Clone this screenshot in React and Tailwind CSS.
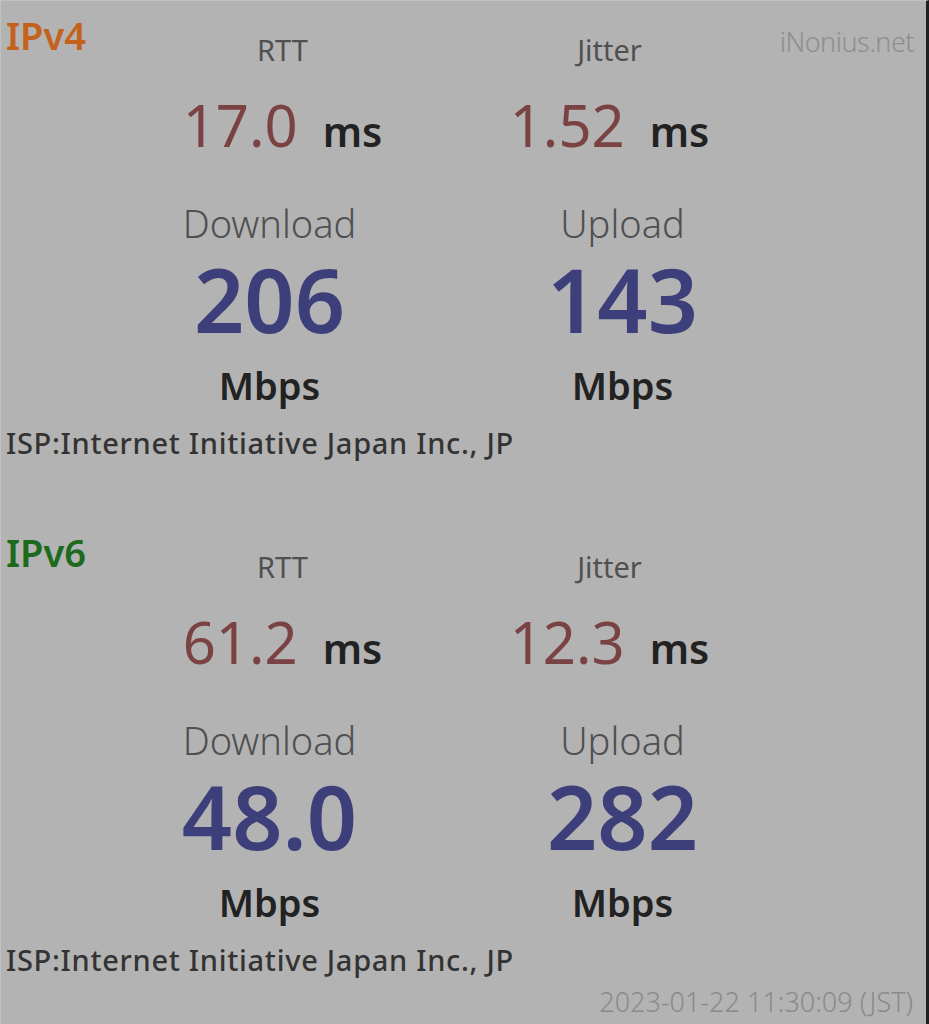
import React from "react";

function Section({ label, labelColor, rtt, jitter, down, up, showBrand }) {
  return (
    <div>
      <div className="flex items-start h-[64px]">
        <div className={`w-[118px] pl-[5px] pt-[16px] text-[38px] leading-none font-semibold ${labelColor}`}>{label}</div>
        <div className="w-[327px] pt-[35px] text-center text-[29px] leading-none text-[#505050]">RTT</div>
        <div className="w-[327px] pt-[35px] text-center text-[29px] leading-none text-[#505050]">Jitter</div>
        {showBrand && (
          <div className="flex-1 pt-[28px] pr-[12px] text-right text-[27px] leading-none font-light text-[#8e8e8e] tracking-[-0.5px]">iNonius.net</div>
        )}
      </div>
      <div className="flex mt-[32px] pl-[118px]">
        <div className="w-[327px] flex justify-center items-baseline gap-[25px]">
          <span className="text-[58px] leading-none text-[#7a4242]">{rtt}</span>
          <span className="text-[41px] leading-none font-semibold text-[#222]">ms</span>
        </div>
        <div className="w-[327px] flex justify-center items-baseline gap-[25px]">
          <span className="text-[58px] leading-none text-[#7a4242]">{jitter}</span>
          <span className="text-[41px] leading-none font-semibold text-[#222]">ms</span>
        </div>
      </div>
      <div className="flex mt-[50px] pl-[92px]">
        {[["Download", down], ["Upload", up]].map(([t, v]) => (
          <div key={t} className="w-[353px] flex flex-col items-center">
            <div className="text-[38px] leading-none font-light text-[#505050]">{t}</div>
            <div className="mt-[13px] text-[88px] leading-none font-semibold text-[#3d3f7b]">{v}</div>
            <div className="mt-[23px] text-[38px] leading-none font-semibold text-[#222]">Mbps</div>
          </div>
        ))}
      </div>
      <div className="mt-[24px] pl-[5px] text-[29px] leading-none font-medium tracking-[0.7px] text-[#333]">ISP:Internet Initiative Japan Inc., JP</div>
    </div>
  );
}

export default function App() {
  return (
    <div
      className="w-[929px] h-[1024px] bg-[#b3b3b3] border-r-[3px] border-r-[#1f1f1f] border-l border-l-[#c2c2c2] border-t border-t-[#c2c2c2] overflow-hidden"
      style={{ fontFamily: '"Noto Sans", "Open Sans", sans-serif' }}
    >
      <div className="-mt-px">
        <Section label="IPv4" labelColor="text-[#c4621d]" rtt="17.0" jitter="1.52" down="206" up="143" showBrand />
        <div className="mt-[60px]">
          <Section label="IPv6" labelColor="text-[#1d6a1d]" rtt="61.2" jitter="12.3" down="48.0" up="282" />
        </div>
        <div className="mt-[14px] pr-[13px] text-right text-[27px] leading-none font-light text-[#8a8a8a]">2023-01-22 11:30:09 (JST)</div>
      </div>
    </div>
  );
}
